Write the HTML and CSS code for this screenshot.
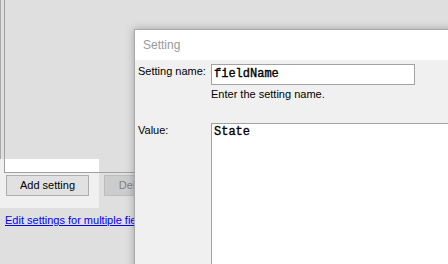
FILE: index.html
```html
<!DOCTYPE html>
<html lang="en">
<head>
    <meta charset="UTF-8">
    <meta name="viewport" content="width=device-width, initial-scale=1.0">
    <title>Setting</title>
    <link rel="stylesheet" href="styles.css">
</head>
<body>
    <div class="screen">
        <!-- Main window, dimmed behind the dialog -->
        <div class="main">
            <div class="list-wrap">
                <div class="list"></div>
            </div>
            <div class="actions">
                <div class="panel">
                    <div class="btn">Add setting</div>
                </div>
                <div class="btn btn-disabled">Delete setting</div>
            </div>
            <div class="link-row">
                <a class="link" href="#">Edit settings for multiple fields</a>
            </div>
        </div>

        <!-- Setting dialog -->
        <div class="dialog">
            <div class="dialog-title">Setting</div>
            <div class="dialog-body">
                <div class="label">Setting name:</div>
                <div class="field field-name">fieldName</div>
                <div class="hint">Enter the setting name.</div>
                <div class="label label-value">Value:</div>
                <div class="field field-value">State</div>
            </div>
        </div>
    </div>
</body>
</html>
```

FILE: styles.css
```css
body {
    margin: 0;
    font-family: "Liberation Sans", Arial, sans-serif;
    font-size: 11px;
    color: #000;
}

.screen {
    position: relative;
    width: 448px;
    height: 264px;
    overflow: hidden;
    background: #dfdfdf;
}

/* Left part of the main window */
.list-wrap {
    padding-left: 4px;
    background:
        linear-gradient(#a8a8a8, #a8a8a8) 0 0 / 1px 159px no-repeat,
        linear-gradient(transparent 159px, #f0f0f0 159px) 0 0 / 99px 100% no-repeat;
}

.list {
    height: 172px;
    border-left: 1px solid #a0a0a0;
    border-bottom: 1px solid #a0a0a0;
    background: linear-gradient(transparent 159px, #fff 159px) 0 0 / 94px 100% no-repeat;
}

.actions {
    display: flex;
    height: 35px;
}

.panel {
    width: 93px;
    padding: 2px 0 0 6px;
    background: #f0f0f0;
}

.btn {
    box-sizing: border-box;
    width: 83px;
    height: 21px;
    line-height: 19px;
    text-align: center;
    white-space: nowrap;
    background: #e1e1e1;
    border: 1px solid #adadad;
}

.btn-disabled {
    width: 97px;
    margin: 2px 0 0 5px;
    color: #838383;
    background: #cccccc;
    border-color: #bcbcbc;
}

.link-row {
    padding: 6px 0 0 5px;
    line-height: 13px;
    white-space: nowrap;
}

.link {
    color: #0000ff;
}

/* Dialog window */
.dialog {
    position: absolute;
    left: 134px;
    top: 29px;
    width: 340px;
    height: 260px;
    border: 1px solid #a9a9a9;
    background: #f0f0f0;
    box-shadow: 0 0 8px rgba(0, 0, 0, 0.28);
}

.dialog-title {
    height: 30px;
    line-height: 30px;
    padding-left: 8px;
    font-size: 12px;
    color: #9a9a9a;
    background: #fff;
}

.dialog-body {
    display: grid;
    grid-template-columns: 76px 1fr;
    padding-top: 4px;
}

.label {
    padding: 1px 0 0 3px;
    line-height: 13px;
    white-space: nowrap;
}

.field {
    box-sizing: border-box;
    border: 1px solid #a2a2a2;
    background: #fff;
    font-family: "Liberation Mono", "Courier New", monospace;
    font-size: 12px;
    -webkit-text-stroke: 0.35px #000;
    padding-left: 2px;
}

.field-name {
    width: 204px;
    height: 21px;
    line-height: 19px;
}

.hint {
    grid-column: 2;
    margin-top: 3px;
    line-height: 13px;
}

.label-value {
    margin-top: 22px;
}

.field-value {
    margin-top: 22px;
    height: 160px;
    padding-top: 1px;
    line-height: 14px;
}
```
